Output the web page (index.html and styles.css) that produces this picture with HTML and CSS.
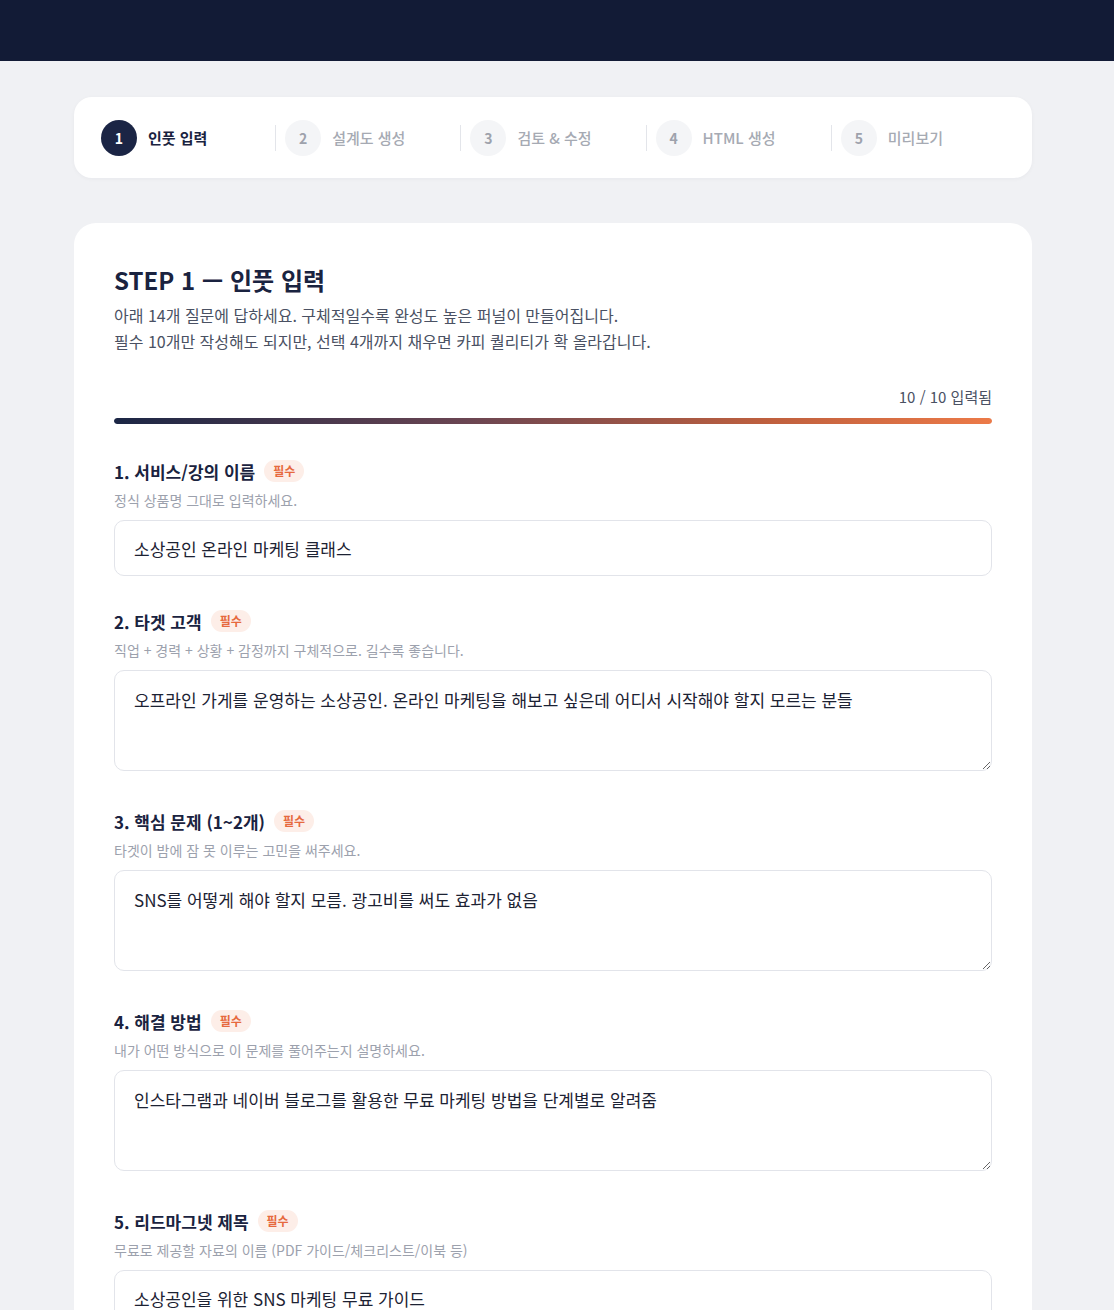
FILE: index.html
```html
<!DOCTYPE html>
<html lang="ko">
<head>
<meta charset="utf-8">
<title>STEP 1 — 인풋 입력</title>
<link rel="stylesheet" href="styles.css">
</head>
<body>
<header class="topbar"></header>
<main class="wrap">
  <nav class="stepper">
    <div class="step active"><span class="num">1</span><span class="label">인풋 입력</span></div>
    <div class="step"><span class="num">2</span><span class="label">설계도 생성</span></div>
    <div class="step"><span class="num">3</span><span class="label">검토 &amp; 수정</span></div>
    <div class="step"><span class="num">4</span><span class="label">HTML 생성</span></div>
    <div class="step"><span class="num">5</span><span class="label">미리보기</span></div>
  </nav>

  <section class="card">
    <h1 class="title">STEP 1 — 인풋 입력</h1>
    <p class="desc">아래 14개 질문에 답하세요. 구체적일수록 완성도 높은 퍼널이 만들어집니다.<br>필수 10개만 작성해도 되지만, 선택 4개까지 채우면 카피 퀄리티가 확 올라갑니다.</p>

    <div class="progress">
      <div class="progress-count">10 / 10 입력됨</div>
      <div class="bar"><div class="fill" style="width:100%"></div></div>
    </div>

    <div class="field">
      <div class="label-row"><span class="q">1. 서비스/강의 이름</span><span class="badge">필수</span></div>
      <div class="hint">정식 상품명 그대로 입력하세요.</div>
      <input class="input" type="text" value="소상공인 온라인 마케팅 클래스">
    </div>

    <div class="field">
      <div class="label-row"><span class="q">2. 타겟 고객</span><span class="badge">필수</span></div>
      <div class="hint">직업 + 경력 + 상황 + 감정까지 구체적으로. 길수록 좋습니다.</div>
      <textarea class="area">오프라인 가게를 운영하는 소상공인. 온라인 마케팅을 해보고 싶은데 어디서 시작해야 할지 모르는 분들</textarea>
    </div>

    <div class="field">
      <div class="label-row"><span class="q">3. 핵심 문제 (1~2개)</span><span class="badge">필수</span></div>
      <div class="hint">타겟이 밤에 잠 못 이루는 고민을 써주세요.</div>
      <textarea class="area">SNS를 어떻게 해야 할지 모름. 광고비를 써도 효과가 없음</textarea>
    </div>

    <div class="field">
      <div class="label-row"><span class="q">4. 해결 방법</span><span class="badge">필수</span></div>
      <div class="hint">내가 어떤 방식으로 이 문제를 풀어주는지 설명하세요.</div>
      <textarea class="area">인스타그램과 네이버 블로그를 활용한 무료 마케팅 방법을 단계별로 알려줌</textarea>
    </div>

    <div class="field">
      <div class="label-row"><span class="q">5. 리드마그넷 제목</span><span class="badge">필수</span></div>
      <div class="hint">무료로 제공할 자료의 이름 (PDF 가이드/체크리스트/이북 등)</div>
      <input class="input" type="text" value="소상공인을 위한 SNS 마케팅 무료 가이드">
    </div>
  </section>
</main>
</body>
</html>
```

FILE: styles.css
```css
* { box-sizing: border-box; }
html, body {
  margin: 0;
  padding: 0;
  background: #f0f1f4;
  font-family: "Noto Sans CJK KR", "Noto Sans", sans-serif;
  color: #1a2340;
}
.topbar {
  height: 61px;
  background: #121b36;
}
.wrap {
  width: 958px;
  margin: 36px 0 0 74px;
}
.stepper {
  display: flex;
  align-items: center;
  height: 81px;
  padding: 0 16px;
  background: #fff;
  border-radius: 18px;
  box-shadow: 0 1px 4px rgba(20, 30, 60, 0.04);
}
.step {
  flex: 1;
  display: flex;
  align-items: center;
}
.step::before {
  content: "";
  width: 1px;
  height: 26px;
  margin-right: 9px;
  background: #e3e5ea;
}
.step:first-child::before { background: transparent; margin-right: 10px; }
.num {
  width: 36px;
  height: 36px;
  border-radius: 50%;
  display: flex;
  align-items: center;
  justify-content: center;
  background: #f4f5f7;
  color: #9ea2ac;
  font-size: 14px;
  font-weight: 700;
}
.label {
  margin-left: 11px;
  font-size: 15px;
  font-weight: 500;
  color: #a6aab3;
}
.step.active .num {
  background: #1b2545;
  color: #fff;
}
.step.active .label {
  color: #1a2340;
  font-weight: 700;
}
.card {
  margin-top: 45px;
  background: #fff;
  border-radius: 22px 22px 0 0;
  padding: 41px 40px 40px;
  min-height: 1100px;
}
.title {
  margin: 0;
  font-size: 24px;
  font-weight: 700;
  line-height: 32px;
  color: #1a2340;
}
.desc {
  margin: 6px 0 0;
  font-size: 16px;
  line-height: 26px;
  color: #4a5163;
}
.progress { margin-top: 33px; }
.progress-count {
  text-align: right;
  font-size: 15px;
  line-height: 20px;
  color: #4a5163;
}
.bar {
  margin-top: 11px;
  height: 6px;
  border-radius: 3px;
  background: #eceef2;
  overflow: hidden;
}
.fill {
  height: 100%;
  border-radius: 3px;
  background: linear-gradient(90deg, #1b2645 0%, #6a4552 40%, #c0603e 75%, #ec7a48 100%);
}
.field {
  display: flow-root;
  margin-top: 33px;
}
.progress + .field { margin-top: 35px; }
.label-row {
  display: flex;
  align-items: center;
  height: 24px;
}
.q {
  font-size: 17px;
  font-weight: 700;
  color: #1a2340;
}
.badge {
  margin-left: 9px;
  padding: 2px 9px;
  border-radius: 11px;
  background: #fdeee8;
  color: #e6693e;
  font-size: 12px;
  font-weight: 700;
  line-height: 18px;
}
.hint {
  margin-top: 7px;
  font-size: 14px;
  line-height: 20px;
  color: #9ca1ad;
}
.input, .area {
  display: block;
  width: 100%;
  margin-top: 10px;
  border: 1px solid #e2e4ea;
  border-radius: 10px;
  background: #fff;
  font-family: "Noto Sans CJK KR", "Noto Sans", sans-serif;
  font-size: 17px;
  color: #1c2233;
  outline: none;
}
.input {
  height: 56px;
  padding: 0 19px;
}
.area {
  height: 101px;
  padding: 16px 19px;
  line-height: 26px;
  resize: vertical;
  margin-bottom: 5px;
}
```
